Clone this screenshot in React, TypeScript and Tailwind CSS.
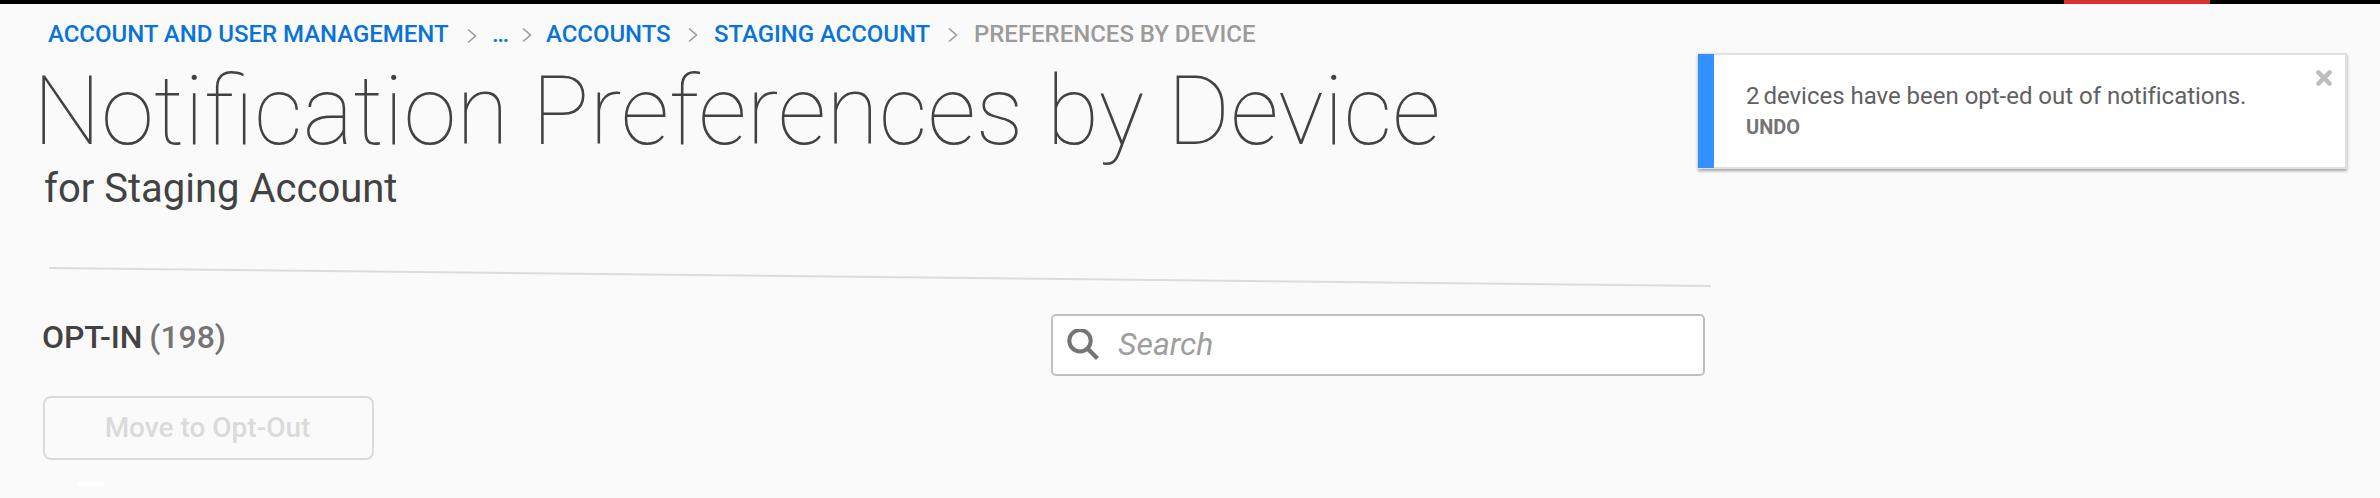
import React from "react";

function Chevron({ className }: { className: string }) {
  return (
    <svg viewBox="0 0 10 16" className={`h-4 w-2.5 shrink-0 ${className}`} fill="none" stroke="#9b9b9b" strokeWidth="1.6">
      <path d="M1 1.5 L8.5 8 L1 14.5" />
    </svg>
  );
}

function Breadcrumbs() {
  return (
    <nav className="flex h-7 items-center text-[24px] leading-7 font-medium whitespace-nowrap text-[#0a73d9]">
      <a className="w-[400px] tracking-[-0.03px]">ACCOUNT AND USER MANAGEMENT</a>
      <Chevron className="mt-1 ml-[19px]" />
      <a className="ml-[15px] w-4">…</a>
      <Chevron className="mt-0.5 ml-[14px]" />
      <a className="ml-[14px] w-[124px] tracking-[-0.05px]">ACCOUNTS</a>
      <Chevron className="mt-0.5 ml-[18px]" />
      <a className="ml-[16px] w-[216px] tracking-[-0.05px]">STAGING ACCOUNT</a>
      <Chevron className="mt-0.5 ml-[18px]" />
      <span className="ml-[16px] tracking-[-0.03px] text-[#9b9b9b]">PREFERENCES BY DEVICE</span>
    </nav>
  );
}

function Toast() {
  return (
    <aside className="mt-[49px] -ml-[14px] flex h-[116px] w-[649px] shrink-0 border-t-2 border-r-2 border-b-2 border-[#e0e0e0] bg-white shadow-[0_2px_3px_rgba(0,0,0,0.35)]">
      <div className="-my-px w-4 shrink-0 bg-[#3390ff]" />
      <div className="flex flex-1 flex-col pt-[25px] pl-8 whitespace-nowrap">
        <p className="h-[33px] text-[24px] leading-8 tracking-[-0.02px] text-[#616161]">
          <span className="[word-spacing:-2px]">2 </span>devices have been opt-ed out of notifications.
        </p>
        <button className="w-fit text-[20px] leading-7 font-bold text-[#757575]">UNDO</button>
      </div>
      <button aria-label="Close" className="mt-[15px] mr-[13px] h-4 w-4">
        <svg viewBox="0 0 16 16" className="h-4 w-4" stroke="#bdbdbd" strokeWidth="4.4" strokeLinecap="round">
          <path d="M2.4 2.4 L13.6 13.6 M13.6 2.4 L2.4 13.6" />
        </svg>
      </button>
    </aside>
  );
}

export default function App() {
  return (
    <div className="h-[498px] w-[2380px] overflow-hidden bg-[#fafafa] font-['Roboto',sans-serif]">
      <div className="flex h-1 bg-black pl-[2064px]">
        <div className="w-[146px] bg-[#d93030]" />
      </div>
      <div className="flex h-[494px]">
        <main className="w-[1712px] shrink-0">
          <div className="pt-4 pl-12">
            <Breadcrumbs />
          </div>
          <h1 className="mt-[7px] ml-[33px] h-[110px] text-[96px] leading-[112px] font-thin whitespace-nowrap text-[#424242]">
            Notification Preferences by Device
          </h1>
          <h2 className="ml-11 h-12 text-[40px] leading-[48px] text-[#424242]">for Staging Account</h2>
          <svg className="mt-[54px] ml-[49px] h-5 w-[1662px]" viewBox="0 0 1662 20">
            <path d="M0 1 L1662 19" stroke="#dcdcdc" strokeWidth="2" />
          </svg>
          <div className="flex justify-between pr-[7px] pl-[42px]">
            <section className="pt-[30px]">
              <h3 className="h-10 text-[32px] leading-10 font-medium tracking-[-0.05px] text-[#424242]">
                OPT-IN <span className="-ml-px text-[#757575]">(198)</span>
              </h3>
              <button className="mt-[39px] ml-px h-16 w-[331px] rounded-lg border-2 border-[#dadada] pr-0.5 text-[28px] font-medium text-[#dadada]">
                Move to Opt-Out
              </button>
              <div className="mt-[22px] ml-[35px] h-1 w-7 rounded-sm bg-white" />
            </section>
            <label className="mt-[27px] flex h-[62px] w-[654px] items-center rounded-[5px] border-2 border-[#c0c0c0] bg-white">
              <svg viewBox="0 0 32 32" className="ml-[14px] h-8 w-8" fill="none" stroke="#757575">
                <circle cx="13" cy="11.7" r="10.7" strokeWidth="4" />
                <path d="M20.5 19.5 L30.5 29.5" strokeWidth="4.4" />
              </svg>
              <span className="ml-[19px] pb-0.5 text-[32px] leading-10 text-[#9e9e9e] italic">Search</span>
            </label>
          </div>
        </main>
        <Toast />
      </div>
    </div>
  );
}
